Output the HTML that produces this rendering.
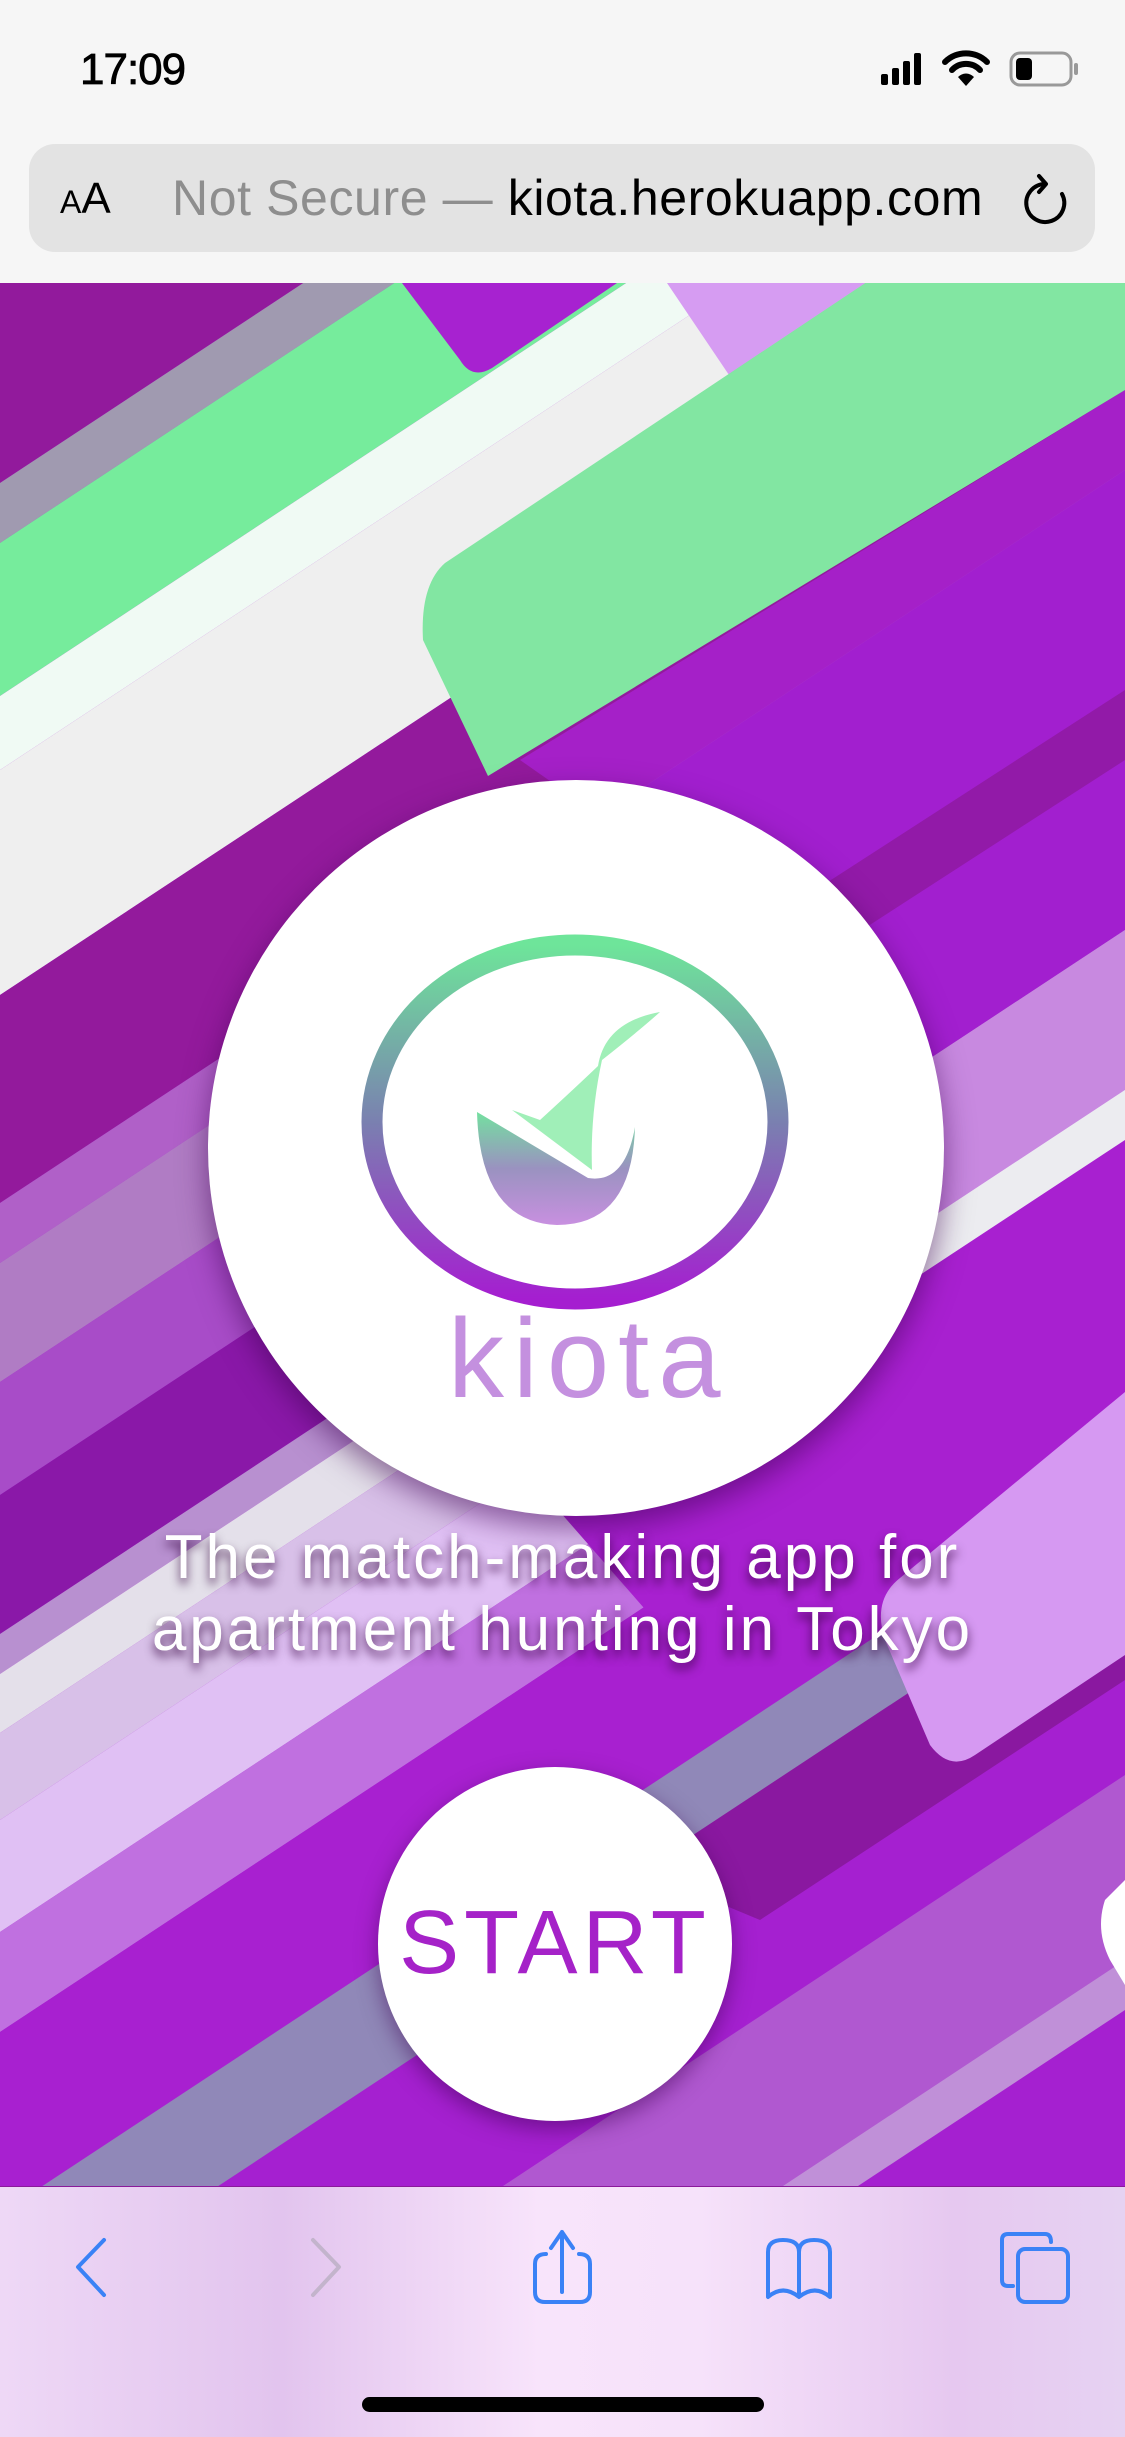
<!DOCTYPE html>
<html><head><meta charset="utf-8">
<style>
html,body{margin:0;padding:0;}
body{width:1125px;height:2436px;position:relative;overflow:hidden;background:#f6f6f6;font-family:"Liberation Sans",sans-serif;}
.abs{position:absolute;}
</style></head><body>
<div class="abs" style="left:0;top:0;width:1125px;height:283px;background:#f6f6f6;"></div>
<div class="abs" style="left:80px;top:45px;font-size:44px;color:#000;letter-spacing:-1px;-webkit-text-stroke:0.8px #000;">17:09</div>
<svg class="abs" style="left:875px;top:48px" width="210" height="45" viewBox="0 0 210 45">
  <rect x="6" y="26" width="7" height="11" rx="2" fill="#000"/>
  <rect x="17" y="20" width="7" height="17" rx="2" fill="#000"/>
  <rect x="28" y="13" width="7" height="24" rx="2" fill="#000"/>
  <rect x="39" y="5" width="7" height="32" rx="2" fill="#000"/>
  <path d="M70 14 a30 30 0 0 1 42 0" stroke="#000" stroke-width="6" fill="none" stroke-linecap="round"/>
  <path d="M77 22 a19 19 0 0 1 28 0" stroke="#000" stroke-width="6" fill="none" stroke-linecap="round"/>
  <path d="M91 38 l-8 -9 a11 11 0 0 1 16 0 z" fill="#000"/>
  <rect x="136" y="5" width="60" height="32" rx="9" fill="none" stroke="#999" stroke-width="3"/>
  <rect x="141" y="10" width="16" height="22" rx="4" fill="#000"/>
  <rect x="199" y="15" width="4" height="12" rx="2" fill="#999"/>
</svg>
<div class="abs" style="left:29px;top:144px;width:1066px;height:108px;border-radius:26px;background:#e3e3e3;"></div>
<div class="abs" style="left:60px;top:174px;color:#000;"><span style="font-size:32px">A</span><span style="font-size:44px">A</span></div>
<div class="abs" style="left:172px;top:169px;font-size:50px;white-space:nowrap;letter-spacing:0.6px;"><span style="color:#8e8e8e">Not Secure — </span><span style="color:#000">kiota.herokuapp.com</span></div>
<svg class="abs" style="left:1018px;top:170px" width="54" height="60" viewBox="0 0 54 60">
  <path d="M27 14 A19 19 0 1 0 44 24" stroke="#000" stroke-width="4" fill="none" stroke-linecap="round"/>
  <path d="M21 6 L28 14 L21 22" stroke="#000" stroke-width="4" fill="none" stroke-linecap="round" stroke-linejoin="round"/>
</svg>
<svg class="abs" style="left:0;top:283px" width="1125" height="1905" viewBox="0 283 1125 1905">
  <rect x="0" y="283" width="1125" height="1905" fill="#a520d0"/>
  <g>
    <polygon points="0,200 1125,-542 1125,-259 0,483" fill="#921a9c"/>
    <polygon points="0,483 1125,-259 1125,-199 0,543" fill="#a09ab0"/>
    <polygon points="0,543 1125,-199 1125,-46 0,696" fill="#76ec9c"/>
    <polygon points="0,696 1125,-46 1125,28 0,770" fill="#f0faf4"/>
    <polygon points="0,770 1125,28 1125,253 0,995" fill="#efefef"/>
    <polygon points="0,995 1125,253 1125,461 0,1203" fill="#931a9c"/>
    <polygon points="0,1203 1125,461 1125,521 0,1263" fill="#b060c8"/>
    <polygon points="0,1263 1125,521 1125,640 0,1382" fill="#b07cc4"/>
    <polygon points="0,1382 1125,640 1125,753 0,1495" fill="#a84cc8"/>
    <polygon points="0,1495 1125,753 1125,892 0,1634" fill="#8a18a8"/>
    <polygon points="0,1634 1125,892 1125,932 0,1674" fill="#b890d0"/>
    <polygon points="0,1674 1125,932 1125,991 0,1733" fill="#e4e0ea"/>
    <polygon points="0,1733 1125,991 1125,1078 0,1820" fill="#d8c0e8"/>
    <polygon points="0,1820 1125,1078 1125,1190 0,1932" fill="#e0c0f4"/>
    <polygon points="0,1932 1125,1190 1125,1290 0,2032" fill="#c070e0"/>
    <polygon points="0,2032 1125,1290 1125,1472 0,2214" fill="#a820d0"/>
    <polygon points="0,2214 1125,1472 1125,1588 0,2330" fill="#9088b8"/>
  </g>
  <polygon points="520,760 1125,390 1125,470 600,816" fill="#a520c8"/>
  <polygon points="600,816 1125,470 1125,930 600,1276" fill="#a21fcf"/>
  <polygon points="800,900 1125,690 1125,760 800,970" fill="#921aa8"/>
  <polygon points="600,1276 1125,930 1125,1090 600,1436" fill="#c889e0"/>
  <polygon points="600,1436 1125,1090 1125,1140 600,1486" fill="#ececf0"/>
  <polygon points="560,1512 1125,1140 1125,1392 700,1672" fill="#a820d0"/>
  <polygon points="640,1870 1125,1550 1125,1680 760,1920" fill="#8a18a0"/>
  <polygon points="500,2188 1125,1775 1125,1980 810,2188" fill="#b058d0"/>
  <polygon points="780,2188 1125,1960 1125,2010 855,2188" fill="#c090d8"/>
  <path d="M1125,1392 L1125,1655 L975,1755 Q950,1772 930,1745 L885,1640 Q872,1600 900,1578 L1125,1392 Z" fill="#d699f2"/>
  <path d="M1125,1880 L1105,1900 Q1095,1930 1110,1960 L1125,1985 Z" fill="#ffffff"/>
  <path d="M402,283 L617,283 L492,368 Q472,380 460,360 Z" fill="#a722d0"/>
  <path d="M667,283 L1004,283 L785,428 Q768,440 758,418 Z" fill="#d69cf2"/>
  <path d="M445,563 L1125,110 L1125,390 L488,776 L423,640 Q420,585 445,563 Z" fill="#82e6a2"/>
</svg>
<div class="abs" style="left:208px;top:780px;width:736px;height:736px;border-radius:50%;background:#fff;box-shadow:0 12px 30px rgba(60,0,80,0.55);"></div>
<svg class="abs" style="left:340px;top:900px" width="480" height="520" viewBox="340 900 480 520">
  <defs>
    <linearGradient id="rg" x1="0" y1="0" x2="0" y2="1">
      <stop offset="0" stop-color="#6ee59a"/><stop offset="0.5" stop-color="#7a80b0"/><stop offset="1" stop-color="#a51ed0"/>
    </linearGradient>
    <linearGradient id="bg" x1="0" y1="0" x2="0" y2="1">
      <stop offset="0" stop-color="#74e0a0"/><stop offset="0.5" stop-color="#9a92c0"/><stop offset="1" stop-color="#c890e0"/>
    </linearGradient>
  </defs>
  <ellipse cx="575" cy="1122" rx="203" ry="177" fill="none" stroke="url(#rg)" stroke-width="21"/>
  <path d="M477,1112 L588,1178 Q625,1184 635,1127 Q632,1225 557,1225 Q480,1222 477,1112 Z" fill="url(#bg)"/>
  <path d="M512,1110 L540,1120 Q575,1088 598,1066 Q605,1022 660,1012 Q640,1030 602,1060 Q590,1115 592,1170 Z" fill="#a0efb8"/>
  <text x="448" y="1397" font-family="Liberation Sans, sans-serif" font-size="112" fill="#c490df" letter-spacing="9">kiota</text>
</svg>
<div class="abs" style="left:0;top:1522px;width:1125px;text-align:center;color:#fff;font-size:62px;line-height:72px;letter-spacing:3px;text-shadow:0 6px 10px rgba(50,0,60,0.8);">The match-making app for<br>apartment hunting in Tokyo</div>
<div class="abs" style="left:378px;top:1767px;width:354px;height:354px;border-radius:50%;background:#fff;box-shadow:0 8px 22px rgba(60,0,80,0.5);"></div>
<div class="abs" style="left:378px;top:1893px;width:354px;text-align:center;color:#a522c8;font-size:90px;line-height:100px;letter-spacing:5px;">START</div>
<div class="abs" style="left:0;top:2186px;width:1125px;height:250px;background:linear-gradient(90deg,#eed8f6 0%,#e2c4ee 25%,#f8e4fb 48%,#f6e2fa 62%,#e6c8f0 85%,#e6d2f2 100%);border-top:1px solid #8a1a9a;"></div>
<svg class="abs" style="left:0;top:2186px" width="1125" height="250" viewBox="0 2186 1125 250">
  <g fill="none" stroke-width="4" stroke-linecap="round" stroke-linejoin="round">
    <path d="M104,2240 L78,2267 L104,2295" stroke="#3a82f6"/>
    <path d="M313,2240 L339,2267 L313,2295" stroke="#c3b4cc"/>
    <path d="M546,2254 Q535,2254 535,2264 L535,2292 Q535,2302 545,2302 L580,2302 Q590,2302 590,2292 L590,2264 Q590,2254 579,2254" stroke="#3a82f6"/>
    <path d="M562,2292 L562,2232 M551,2248 L562,2232 L573,2248" stroke="#3a82f6"/>
    <path d="M768,2252 Q768,2240 783,2240 Q799,2240 799,2252 Q799,2240 814,2240 Q830,2240 830,2252 L830,2297 Q815,2284 799,2297 Q783,2284 768,2297 Z M799,2252 L799,2293" stroke="#3a82f6"/>
    <path d="M1013,2286 L1008,2286 Q1002,2286 1002,2280 L1002,2240 Q1002,2234 1008,2234 L1045,2234 Q1051,2234 1051,2242" stroke="#3a82f6"/>
    <rect x="1018" y="2249" width="50" height="53" rx="7" stroke="#3a82f6"/>
  </g>
  <rect x="362" y="2397" width="402" height="15" rx="7.5" fill="#000"/>
</svg>
</body></html>
